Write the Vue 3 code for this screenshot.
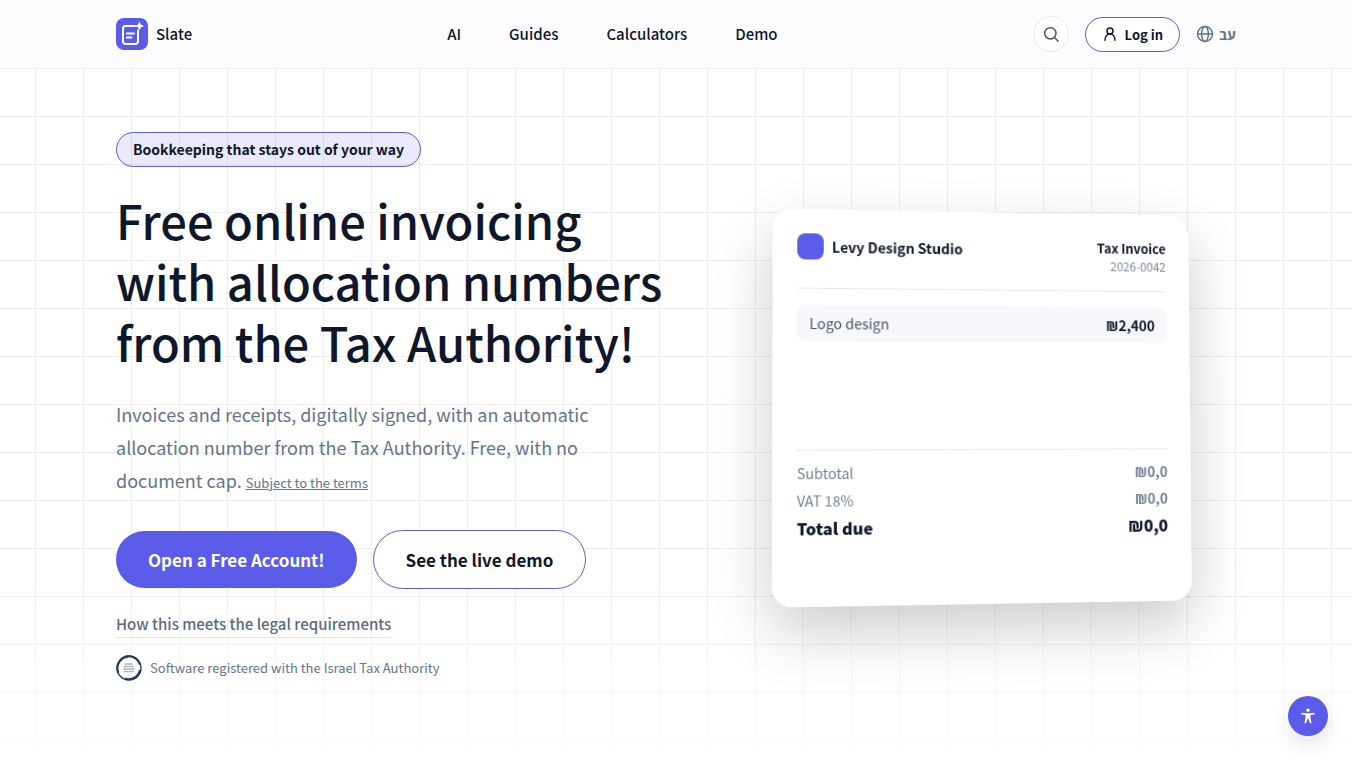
<script setup>
import { ref } from "vue";

const navLinks = ref(["AI", "Guides", "Calculators", "Demo"]);

const invoice = ref({
  business: "Levy Design Studio",
  type: "Tax Invoice",
  number: "2026-0042",
  items: [{ id: 1, name: "Logo design", price: "₪2,400" }],
  totals: [
    { id: "subtotal", label: "Subtotal", value: "₪0,0" },
    { id: "vat", label: "VAT 18%", value: "₪0,0" },
    { id: "total", label: "Total due", value: "₪0,0", due: true }
  ]
});
</script>

<template>
  <div class="page">
    <header class="header">
      <div class="container header-inner">
        <a href="#" class="brand">
          <svg class="brand-logo" viewBox="0 0 32 32" aria-hidden="true">
            <rect width="32" height="32" rx="8" fill="#5b5bea" />
            <path d="M19 8H9.500a2.500 2.500 0 0 0-2.500 2.500v13a2.500 2.500 0 0 0 2.500 2.500h10a2.500 2.500 0 0 0 2.500-2.500V12.500" fill="none" stroke="#fff" stroke-width="2" stroke-linecap="round" />
            <path d="M10.700 15.500h7.300M10.700 19.500h4.800" stroke="#fff" stroke-width="1.900" stroke-linecap="round" />
            <path d="M23.500 3.500l1.400 3.100 3.100 1.400-3.100 1.400-1.400 3.100-1.400-3.100-3.100-1.400 3.100-1.400z" fill="#fff" />
          </svg>
          <span>Slate</span>
        </a>

        <nav class="nav">
          <a v-for="link in navLinks" :key="link" href="#">{{ link }}</a>
        </nav>

        <div class="actions">
          <button class="btn-search" aria-label="Search">
            <svg width="16" height="16" viewBox="0 0 24 24" fill="none" stroke="currentColor" stroke-width="2.200" stroke-linecap="round">
              <circle cx="11" cy="11" r="8.500" />
              <path d="M17.500 17.500L22.500 22.500" />
            </svg>
          </button>
          <a href="#" class="btn-login">
            <svg width="16" height="16" viewBox="0 0 24 24" fill="none" stroke="currentColor" stroke-width="2.200" stroke-linecap="round">
              <circle cx="12" cy="7.500" r="4.500" />
              <path d="M4.500 21.500c0-5.500 3-9.500 7.500-9.500s7.500 4 7.500 9.500" />
            </svg>
            Log in
          </a>
          <a href="#" class="lang" lang="he">
            <svg width="18" height="18" viewBox="0 0 24 24" fill="none" stroke="currentColor" stroke-width="2">
              <circle cx="12" cy="12" r="10" />
              <ellipse cx="12" cy="12" rx="4.500" ry="10" />
              <path d="M2 12h20" />
            </svg>
            עב
          </a>
        </div>
      </div>
    </header>

    <main class="hero">
      <div class="container hero-grid">
        <section class="intro">
          <span class="badge">Bookkeeping that stays out of your way</span>
          <h1>Free online invoicing with allocation numbers from the Tax Authority!</h1>
          <p class="lead">
            Invoices and receipts, digitally signed, with an automatic allocation number from the Tax Authority. Free, with no document cap.
            <a href="#">Subject to the terms</a>
          </p>
          <div class="cta">
            <a href="#" class="btn-primary">Open a Free Account!</a>
            <a href="#" class="btn-outline">See the live demo</a>
          </div>
          <a href="#" class="legal">How this meets the legal requirements</a>
          <div class="registered">
            <svg width="26" height="26" viewBox="0 0 26 26" fill="none" aria-hidden="true">
              <circle cx="13" cy="13" r="12" fill="#fff" stroke="#1f3a68" stroke-width="1.400" />
              <path d="M2.500 18a11.500 11.500 0 0 1 10-16.300M9 1.800a11.800 11.800 0 0 1 15 8M24 15a11.500 11.500 0 0 1-15 8.500" stroke="#1f3a68" stroke-width="2" />
              <path d="M9 9h8M8 11.500h10M7.500 14h11M8 16.500h10" stroke="#a3a7b0" stroke-width="1.500" stroke-dasharray="2 .4" />
            </svg>
            <span>Software registered with the Israel Tax Authority</span>
          </div>
        </section>

        <section class="preview">
          <article class="invoice">
            <div class="invoice-head">
              <div class="business">
                <span class="business-logo"></span>
                <strong>{{ invoice.business }}</strong>
              </div>
              <div class="doc">
                <strong>{{ invoice.type }}</strong>
                <span>{{ invoice.number }}</span>
              </div>
            </div>

            <div class="items">
              <div v-for="item in invoice.items" :key="item.id" class="item">
                <span>{{ item.name }}</span>
                <strong>{{ item.price }}</strong>
              </div>
            </div>

            <dl class="totals">
              <div v-for="row in invoice.totals" :key="row.id" :class="{ due: row.due }">
                <dt>{{ row.label }}</dt>
                <dd>{{ row.value }}</dd>
              </div>
            </dl>
          </article>
        </section>
      </div>
    </main>

    <button class="btn-access" aria-label="Accessibility">
      <svg width="16" height="16" viewBox="0 0 24 24" fill="currentColor">
        <circle cx="12" cy="3.200" r="2.600" />
        <path d="M2.500 7c6 1.400 13 1.400 19 0l.5 2.200c-2 .7-4.300 1.100-6.300 1.300v4.200l1.700 7.700-2.300.6-2.500-6.800h-1.200l-2.500 6.800-2.300-.6 1.700-7.700v-4.200c-2-.2-4.300-.6-6.300-1.300z" />
      </svg>
    </button>
  </div>
</template>

<style>
body{margin:0;background:#fff}
</style>

<style scoped>
*{box-sizing:border-box;margin:0;padding:0}
a{color:inherit;text-decoration:none}
button{font:inherit;cursor:pointer}
.page{min-height:100vh;display:flex;flex-direction:column;font-family:"Noto Sans CJK SC","Open Sans",sans-serif;color:#0f172a}
.container{width:100%;max-width:1184px;margin:0 auto;padding:0 32px}

.header{background:#fcfcff;border-bottom:1px solid #f0f0f3}
.header-inner{display:flex;align-items:center;justify-content:space-between;height:68px}
.brand{display:flex;align-items:center;gap:8px;font-size:15px;line-height:24px;font-weight:500}
.brand-logo{width:32px;height:32px}
.nav{display:flex;gap:48px;font-size:15px;line-height:24px;font-weight:500}
.actions{display:flex;align-items:center;gap:16px}
.btn-search{width:36px;height:36px;border:1px solid #e8e8f2;border-radius:50%;background:#fff;color:#475569;display:flex;align-items:center;justify-content:center}
.btn-login{display:flex;align-items:center;gap:7px;height:35px;padding:0 16px;border:1px solid #5b5bd6;border-radius:18px;background:#fff;font-size:13px;font-weight:700}
.lang{display:flex;align-items:center;gap:5px;color:#64748b;font-size:14px;font-weight:700}

.hero{flex:1;display:flex;align-items:flex-start;padding:63px 0 72px;position:relative}
.hero::before{content:"";position:absolute;inset:0 0 8px;background-image:linear-gradient(to right,#eeeef0 1px,transparent 1px),linear-gradient(to bottom,#eeeef0 1px,transparent 1px);background-size:48px 48px;background-position:35px -1px;mask-image:linear-gradient(to bottom,#000 75%,rgba(0,0,0,.25))}
.hero-grid{position:relative;display:grid;grid-template-columns:17fr 15fr;gap:48px;align-items:center}
.intro{display:flex;flex-direction:column;align-items:flex-start}
.badge{padding:0 16px;border:1px solid #5b5bd6;border-radius:18px;background:rgba(91,91,234,.13);font-size:14px;line-height:33px;font-weight:700}
h1{margin-top:22px;font-size:47px;line-height:61px;font-weight:500}
.lead{max-width:520px;margin-top:26px;font-size:18px;line-height:33px;color:#64748b}
.lead a{font-size:13px;text-decoration:underline}
.cta{display:flex;align-items:center;gap:16px;margin-top:31px;font-size:17px;font-weight:700}
.btn-primary{padding:0 32px;border-radius:29px;background:#5b5bea;color:#fff;line-height:57px}
.btn-outline{padding:0 32px;border:1px solid #5b5bd6;border-radius:30px;background:#fff;line-height:57px}
.legal{margin-top:24px;padding-bottom:2px;border-bottom:1px solid #e2e5ea;color:#5b6b82;font-size:15px;line-height:22px;font-weight:500}
.registered{display:flex;align-items:center;gap:8px;margin-top:17px;color:#64748b;font-size:13px;line-height:24px}

.preview{display:flex;justify-content:center;perspective:1200px}
.invoice{width:420px;min-height:392px;padding:24px;border-radius:20px;background:#fff;box-shadow:0 24px 60px rgba(0,0,0,.2);transform:rotateY(6deg) rotateX(2deg);display:flex;flex-direction:column}
.invoice-head{display:flex;justify-content:space-between;align-items:flex-start;padding-bottom:16px;border-bottom:1px solid #e8e8ec}
.business{display:flex;align-items:center;gap:8px;font-size:14px;line-height:26px}
.business-logo{width:26px;height:26px;border-radius:8px;background:#5b5bea}
.doc{display:flex;flex-direction:column;align-items:flex-end;padding-top:2px;font-size:13px;line-height:18px}
.doc span{font-size:12px;color:#7c8798}
.items{margin-top:16px;min-height:143px}
.item{display:flex;justify-content:space-between;padding:0 12px;border-radius:8px;background:#f7f7fc;font-size:14px;line-height:36px;color:#475569}
.item strong{color:#0f172a}
.totals{border-top:1px solid #e8e8ec;padding-top:9px;font-size:14px;line-height:27px;color:#748094}
.totals div{display:flex;justify-content:space-between}
.totals dd{font-weight:700}
.totals .due{font-size:16px;color:#0f172a}
.totals .due dt,.totals .due dd{font-weight:900}

.btn-access{position:fixed;right:24px;bottom:24px;width:40px;height:40px;border:none;border-radius:50%;background:#5b5bea;color:#fff;display:flex;align-items:center;justify-content:center;box-shadow:0 8px 20px rgba(0,0,0,.1)}
</style>
